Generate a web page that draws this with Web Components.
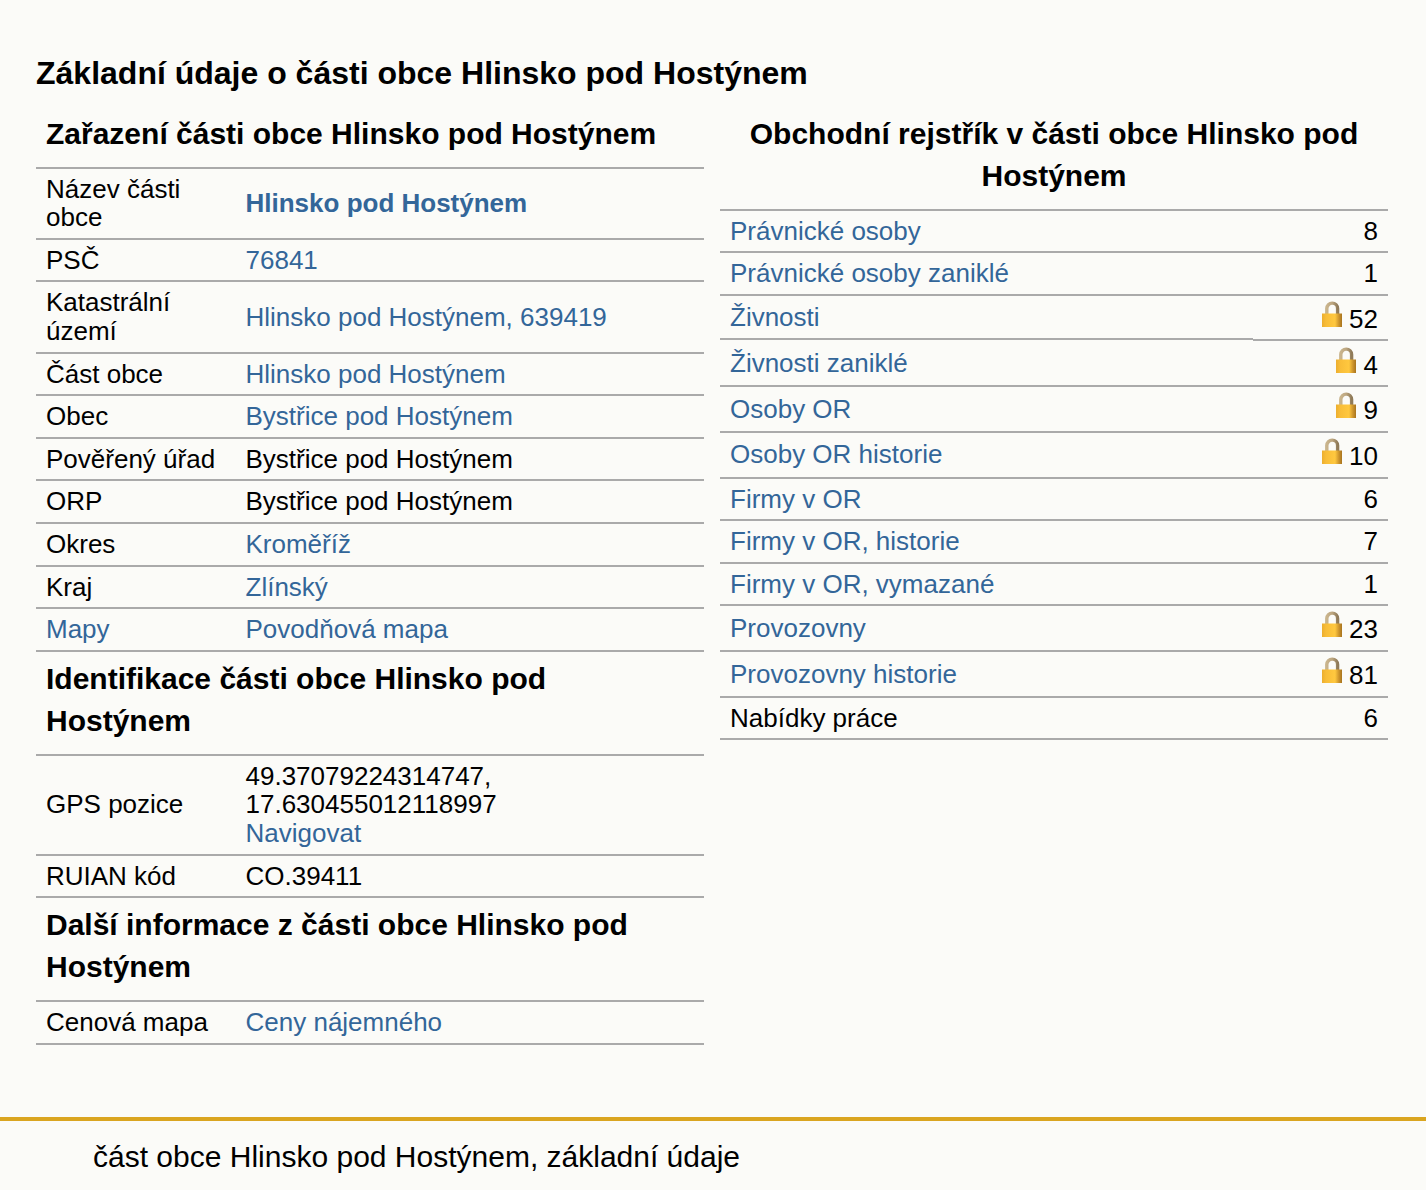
<!DOCTYPE html>
<html lang="cs">
<head>
<meta charset="utf-8">
<title>Hlinsko pod Hostýnem</title>
<style>
  html, body { margin: 0; background: #fbfbf8; }
  body { font: 26px/28.6px "Liberation Sans", Arial, sans-serif; color: #000; }
  a { color: #369; text-decoration: none; }
</style>
</head>
<body>
<town-page>
  <span slot="title">Základní údaje o části obce Hlinsko pod Hostýnem</span>
  <info-column slot="left">
    <section-title>Zařazení části obce Hlinsko pod Hostýnem</section-title>
    <info-row><span slot="label">Název části obce</span><a href="#"><b>Hlinsko pod Hostýnem</b></a></info-row>
    <info-row><span slot="label">PSČ</span><a href="#">76841</a></info-row>
    <info-row><span slot="label">Katastrální území</span><a href="#">Hlinsko pod Hostýnem, 639419</a></info-row>
    <info-row><span slot="label">Část obce</span><a href="#">Hlinsko pod Hostýnem</a></info-row>
    <info-row><span slot="label">Obec</span><a href="#">Bystřice pod Hostýnem</a></info-row>
    <info-row><span slot="label">Pověřený úřad</span>Bystřice pod Hostýnem</info-row>
    <info-row><span slot="label">ORP</span>Bystřice pod Hostýnem</info-row>
    <info-row><span slot="label">Okres</span><a href="#">Kroměříž</a></info-row>
    <info-row><span slot="label">Kraj</span><a href="#">Zlínský</a></info-row>
    <info-row><a slot="label" href="#">Mapy</a><a href="#">Povodňová mapa</a></info-row>
    <section-title>Identifikace části obce Hlinsko pod Hostýnem</section-title>
    <info-row><span slot="label">GPS pozice</span>49.37079224314747, 17.630455012118997<br><a href="#">Navigovat</a></info-row>
    <info-row><span slot="label">RUIAN kód</span>CO.39411</info-row>
    <section-title>Další informace z části obce Hlinsko pod Hostýnem</section-title>
    <info-row><span slot="label">Cenová mapa</span><a href="#">Ceny nájemného</a></info-row>
  </info-column>
  <info-column slot="right">
    <section-title center>Obchodní rejstřík v části obce Hlinsko pod Hostýnem</section-title>
    <count-row count="8"><a href="#">Právnické osoby</a></count-row>
    <count-row count="1"><a href="#">Právnické osoby zaniklé</a></count-row>
    <count-row count="52" locked stepped><a href="#">Živnosti</a></count-row>
    <count-row count="4" locked><a href="#">Živnosti zaniklé</a></count-row>
    <count-row count="9" locked><a href="#">Osoby OR</a></count-row>
    <count-row count="10" locked><a href="#">Osoby OR historie</a></count-row>
    <count-row count="6"><a href="#">Firmy v OR</a></count-row>
    <count-row count="7"><a href="#">Firmy v OR, historie</a></count-row>
    <count-row count="1"><a href="#">Firmy v OR, vymazané</a></count-row>
    <count-row count="23" locked><a href="#">Provozovny</a></count-row>
    <count-row count="81" locked><a href="#">Provozovny historie</a></count-row>
    <count-row count="6">Nabídky práce</count-row>
  </info-column>
  <span slot="footer">část obce Hlinsko pod Hostýnem, základní údaje</span>
</town-page>

<script>
class TownPage extends HTMLElement {
    connectedCallback() {
        this.attachShadow({mode: 'open'});
        this.shadowRoot.innerHTML = `
          <style>
            :host { display: block; }
            h1 { font-size: 32px; line-height: 38px; font-weight: bold; margin: 0; padding: 54px 36px 14.6px; }
            .columns { display: grid; grid-template-columns: 668px 668px; gap: 16px; padding: 0 38px 0 36px; height: 1010.4px; box-sizing: border-box; align-content: start; }
            footer { border-top: 4px solid #daa520; padding: 18px 93px 0; font-size: 30px; line-height: 36px; height: 73px; box-sizing: border-box; }
          </style>
          <h1><slot name="title"></slot></h1>
          <div class="columns">
            <slot name="left"></slot>
            <slot name="right"></slot>
          </div>
          <footer><slot name="footer"></slot></footer>`;
    }
}

class InfoColumn extends HTMLElement {
    connectedCallback() {
        this.attachShadow({mode: 'open'});
        this.shadowRoot.innerHTML = `
          <style>:host { display: block; }</style>
          <slot></slot>`;
    }
}

class SectionTitle extends HTMLElement {
    connectedCallback() {
        this.attachShadow({mode: 'open'});
        this.shadowRoot.innerHTML = `
          <style>
            :host { display: block; font-size: 30px; line-height: 42px; font-weight: bold; padding: 6px 10px 12px; border-bottom: 2px solid #aaa; }
            :host([center]) { text-align: center; }
          </style>
          <slot></slot>`;
    }
}

class InfoRow extends HTMLElement {
    connectedCallback() {
        this.attachShadow({mode: 'open'});
        this.shadowRoot.innerHTML = `
          <style>
            :host { display: flex; align-items: center; border-bottom: 2px solid #aaa; padding: 6px 10px; }
            .label { flex: 0 0 180px; margin-right: 19.5px; }
            .value { flex: 1; }
          </style>
          <div class="label"><slot name="label"></slot></div>
          <div class="value"><slot></slot></div>`;
    }
}

class LockIcon extends HTMLElement {
    connectedCallback() {
        this.attachShadow({mode: 'open'});
        this.shadowRoot.innerHTML = `
          <style>
            :host { display: inline-block; width: 20px; height: 26px; transform: translateY(-1px); }
            svg { display: block; }
          </style>
          <svg width="20" height="26" viewBox="0 0 20 26">
            <defs>
              <linearGradient id="body" x1="0" x2="1" y1="0" y2="0">
                <stop offset="0" stop-color="#ecae2e"/>
                <stop offset=".2" stop-color="#f8bd38"/>
                <stop offset=".65" stop-color="#ffc83f"/>
                <stop offset=".85" stop-color="#cc932b"/>
                <stop offset="1" stop-color="#a8741f"/>
              </linearGradient>
              <linearGradient id="shackle" x1="0" x2="1" y1="0" y2="0">
                <stop offset="0" stop-color="#c9b48c"/>
                <stop offset=".5" stop-color="#bca680"/>
                <stop offset="1" stop-color="#8f7a58"/>
              </linearGradient>
            </defs>
            <path d="M4.8 14V7.5a5.4 5.4 0 0 1 10.8 0V14" fill="none" stroke="url(#shackle)" stroke-width="3.4"/>
            <rect x="0" y="12.5" width="20" height="13.5" fill="url(#body)"/>
          </svg>`;
    }
}

class CountRow extends HTMLElement {
    connectedCallback() {
        this.attachShadow({mode: 'open'});
        const lock = this.hasAttribute('locked') ? '<lock-icon></lock-icon> ' : '';
        this.shadowRoot.innerHTML = `
          <style>
            :host { display: flex; }
            :host([locked]) { height: 45.7px; }
            .name, .count { border-bottom: 2px solid #aaa; padding: 6px 10px; display: flex; align-items: center; box-sizing: border-box; }
            .name { flex: 1; }
            .count { flex: 0 0 135px; justify-content: flex-end; }
            .count span { display: block; }
            :host([stepped]) .name { margin-bottom: 1px; }
          </style>
          <div class="name"><div><slot></slot></div></div>
          <div class="count"><span>${lock}${this.getAttribute('count')}</span></div>`;
    }
}

customElements.define('town-page', TownPage);
customElements.define('info-column', InfoColumn);
customElements.define('section-title', SectionTitle);
customElements.define('info-row', InfoRow);
customElements.define('lock-icon', LockIcon);
customElements.define('count-row', CountRow);
</script>
</body>
</html>
